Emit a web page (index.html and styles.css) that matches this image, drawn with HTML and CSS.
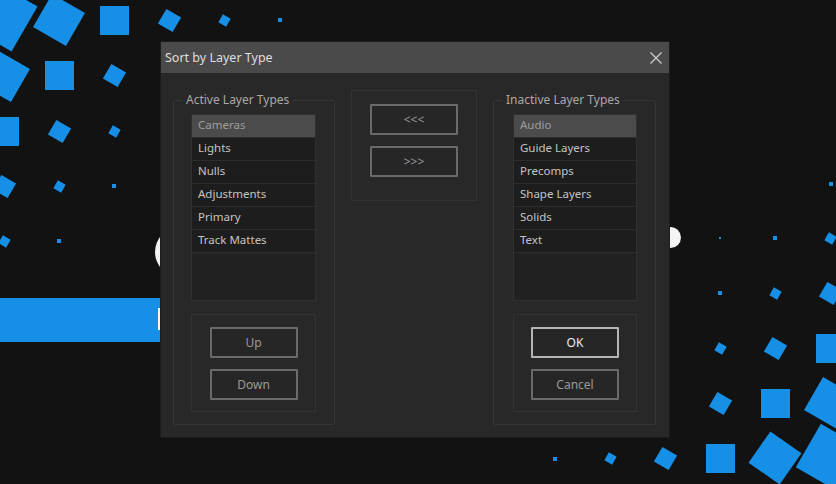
FILE: index.html
```html
<!DOCTYPE html>
<html lang="en">
<head>
    <meta charset="UTF-8">
    <meta name="viewport" content="width=device-width, initial-scale=1.0">
    <title>Sort by Layer Type</title>
    <link rel="stylesheet" href="styles.css">
</head>
<body>
    <div class="stage">
        <div class="blue-bar"></div>
        <div class="bar-mark"></div>
        <div class="glyph glyph-left"></div>
        <div class="glyph glyph-right"></div>
        <div id="squares"></div>

        <div class="dialog">
            <div class="titlebar">
                <span class="title">Sort by Layer Type</span>
                <svg class="close" width="12" height="12" viewBox="0 0 12 12">
                    <path d="M0.5 0.5 L11.5 11.5 M11.5 0.5 L0.5 11.5" stroke="#cfcfcf" stroke-width="1.3" fill="none"/>
                </svg>
            </div>
            <div class="dialog-body">
                <fieldset class="group">
                    <legend>Active Layer Types</legend>
                    <ul class="list">
                        <li class="selected">Cameras</li>
                        <li>Lights</li>
                        <li>Nulls</li>
                        <li>Adjustments</li>
                        <li>Primary</li>
                        <li>Track Mattes</li>
                    </ul>
                    <div class="btn-panel">
                        <button class="btn">Up</button>
                        <button class="btn">Down</button>
                    </div>
                </fieldset>

                <div class="move-panel">
                    <button class="btn">&lt;&lt;&lt;</button>
                    <button class="btn">&gt;&gt;&gt;</button>
                </div>

                <fieldset class="group group-right">
                    <legend>Inactive Layer Types</legend>
                    <ul class="list">
                        <li class="selected">Audio</li>
                        <li>Guide Layers</li>
                        <li>Precomps</li>
                        <li>Shape Layers</li>
                        <li>Solids</li>
                        <li>Text</li>
                    </ul>
                    <div class="btn-panel">
                        <button class="btn btn-default">OK</button>
                        <button class="btn">Cancel</button>
                    </div>
                </fieldset>
            </div>
        </div>
    </div>

    <script>
        // center x, center y, size, rotation
        var squares = [
            [2, 16, 52, 30], [59, 20, 38, 30], [114, 20, 29, 0], [169, 20, 17, 30], [224, 20, 9, 30], [280, 20, 4, 0],
            [4, 76, 38, 30], [59, 75, 29, 0], [114, 75, 17, 30],
            [4, 131, 29, 0], [59, 131, 17, 30], [114, 131, 9, 30],
            [4, 186, 17, 30], [59, 186, 9, 30], [114, 186, 4, 0],
            [4, 241, 9, 30], [59, 241, 4, 0],
            [831, 184, 4, 0],
            [720, 238, 2, 0], [775, 238, 4, 0], [830, 238, 9, 30],
            [720, 293, 4, 0], [775, 293, 9, 30], [830, 293, 17, 30],
            [720, 348, 9, 30], [775, 348, 17, 30], [830, 348, 29, 0],
            [720, 403, 17, 30], [775, 403, 29, 0], [830, 403, 38, 30],
            [555, 459, 4, 0], [610, 458, 9, 30], [665, 458, 17, 30], [720, 458, 29, 0], [775, 458, 38, 35], [830, 458, 50, 30]
        ];

        var holder = document.getElementById('squares');
        squares.forEach(function (s) {
            var el = document.createElement('div');
            el.className = 'sq';
            el.style.left = (s[0] - s[2] / 2) + 'px';
            el.style.top = (s[1] - s[2] / 2) + 'px';
            el.style.width = s[2] + 'px';
            el.style.height = s[2] + 'px';
            el.style.transform = 'rotate(' + s[3] + 'deg)';
            holder.appendChild(el);
        });
    </script>
</body>
</html>
```

FILE: styles.css
```css
body {
    margin: 0;
    background-color: #121212;
    font-family: "Noto Sans", "Open Sans", sans-serif;
    overflow: hidden;
}
.stage {
    position: relative;
    width: 836px;
    height: 484px;
    overflow: hidden;
}
.sq {
    position: absolute;
    background-color: #168fe6;
}
.blue-bar {
    position: absolute;
    left: 0;
    top: 298px;
    width: 300px;
    height: 44px;
    background-color: #168fe6;
}
.bar-mark {
    position: absolute;
    left: 158px;
    top: 308px;
    width: 10px;
    height: 22px;
    background-color: #f4f4f4;
}
.glyph {
    position: absolute;
    background-color: #f4f4f4;
    border-radius: 50%;
}
.glyph-left {
    left: 155px;
    top: 227px;
    width: 50px;
    height: 50px;
}
.glyph-right {
    left: 660px;
    top: 227px;
    width: 21px;
    height: 21px;
}

/* dialog */
.dialog {
    position: absolute;
    left: 161px;
    top: 42px;
    width: 508px;
    height: 395px;
    background-color: #282828;
    box-shadow: 0 0 0 1px #1c1c1c;
}
.titlebar {
    height: 31px;
    background-color: #4a4a4a;
    display: flex;
    align-items: center;
    justify-content: space-between;
    padding: 0 7px 0 4px;
}
.title {
    color: #dedede;
    font-size: 12.5px;
}
.close {
    display: block;
}
.dialog-body {
    display: flex;
    align-items: flex-start;
    gap: 16px;
    padding: 20px 13px 0 12px;
}
.group {
    box-sizing: border-box;
    width: 162px;
    height: 332px;
    margin: 0;
    padding: 7px 18px 12px 17px;
    border: 1px solid #363636;
    border-radius: 2px;
    display: flex;
    flex-direction: column;
    gap: 13px;
}
.group-right {
    width: 163px;
    padding-left: 19px;
}
.group legend {
    color: #a9a9a9;
    font-size: 12px;
    line-height: 14px;
    padding: 0 4px;
    margin-left: -9px;
    white-space: nowrap;
}
.group-right legend {
    margin-left: -11px;
}
.list {
    list-style: none;
    margin: 0;
    padding: 0;
    height: 188px;
    box-sizing: border-box;
    border: 1px solid #303030;
    background-color: #212121;
}
.list li {
    height: 22px;
    line-height: 20px;
    border-bottom: 1px solid #2d2d2d;
    background-color: #1d1d1d;
    color: #c4c4c4;
    font-size: 11.5px;
    padding-left: 6px;
}
.list li.selected {
    background-color: #4b4b4b;
    color: #9d9d9d;
}
.btn-panel,
.move-panel {
    box-sizing: border-box;
    border: 1px solid #333;
    display: flex;
    flex-direction: column;
    align-items: center;
    gap: 11px;
}
.btn-panel {
    height: 98px;
    padding-top: 12px;
}
.move-panel {
    width: 126px;
    height: 111px;
    margin-top: -3px;
    padding-top: 13px;
}
.btn {
    box-sizing: border-box;
    width: 88px;
    height: 31px;
    background-color: #262626;
    border: 2px solid #6a6a6a;
    border-radius: 1px;
    color: #9a9a9a;
    font-family: "Noto Sans", "Open Sans", sans-serif;
    font-size: 12px;
    padding: 0;
}
.btn-default {
    border-color: #b4b4b4;
    color: #ececec;
}
```
